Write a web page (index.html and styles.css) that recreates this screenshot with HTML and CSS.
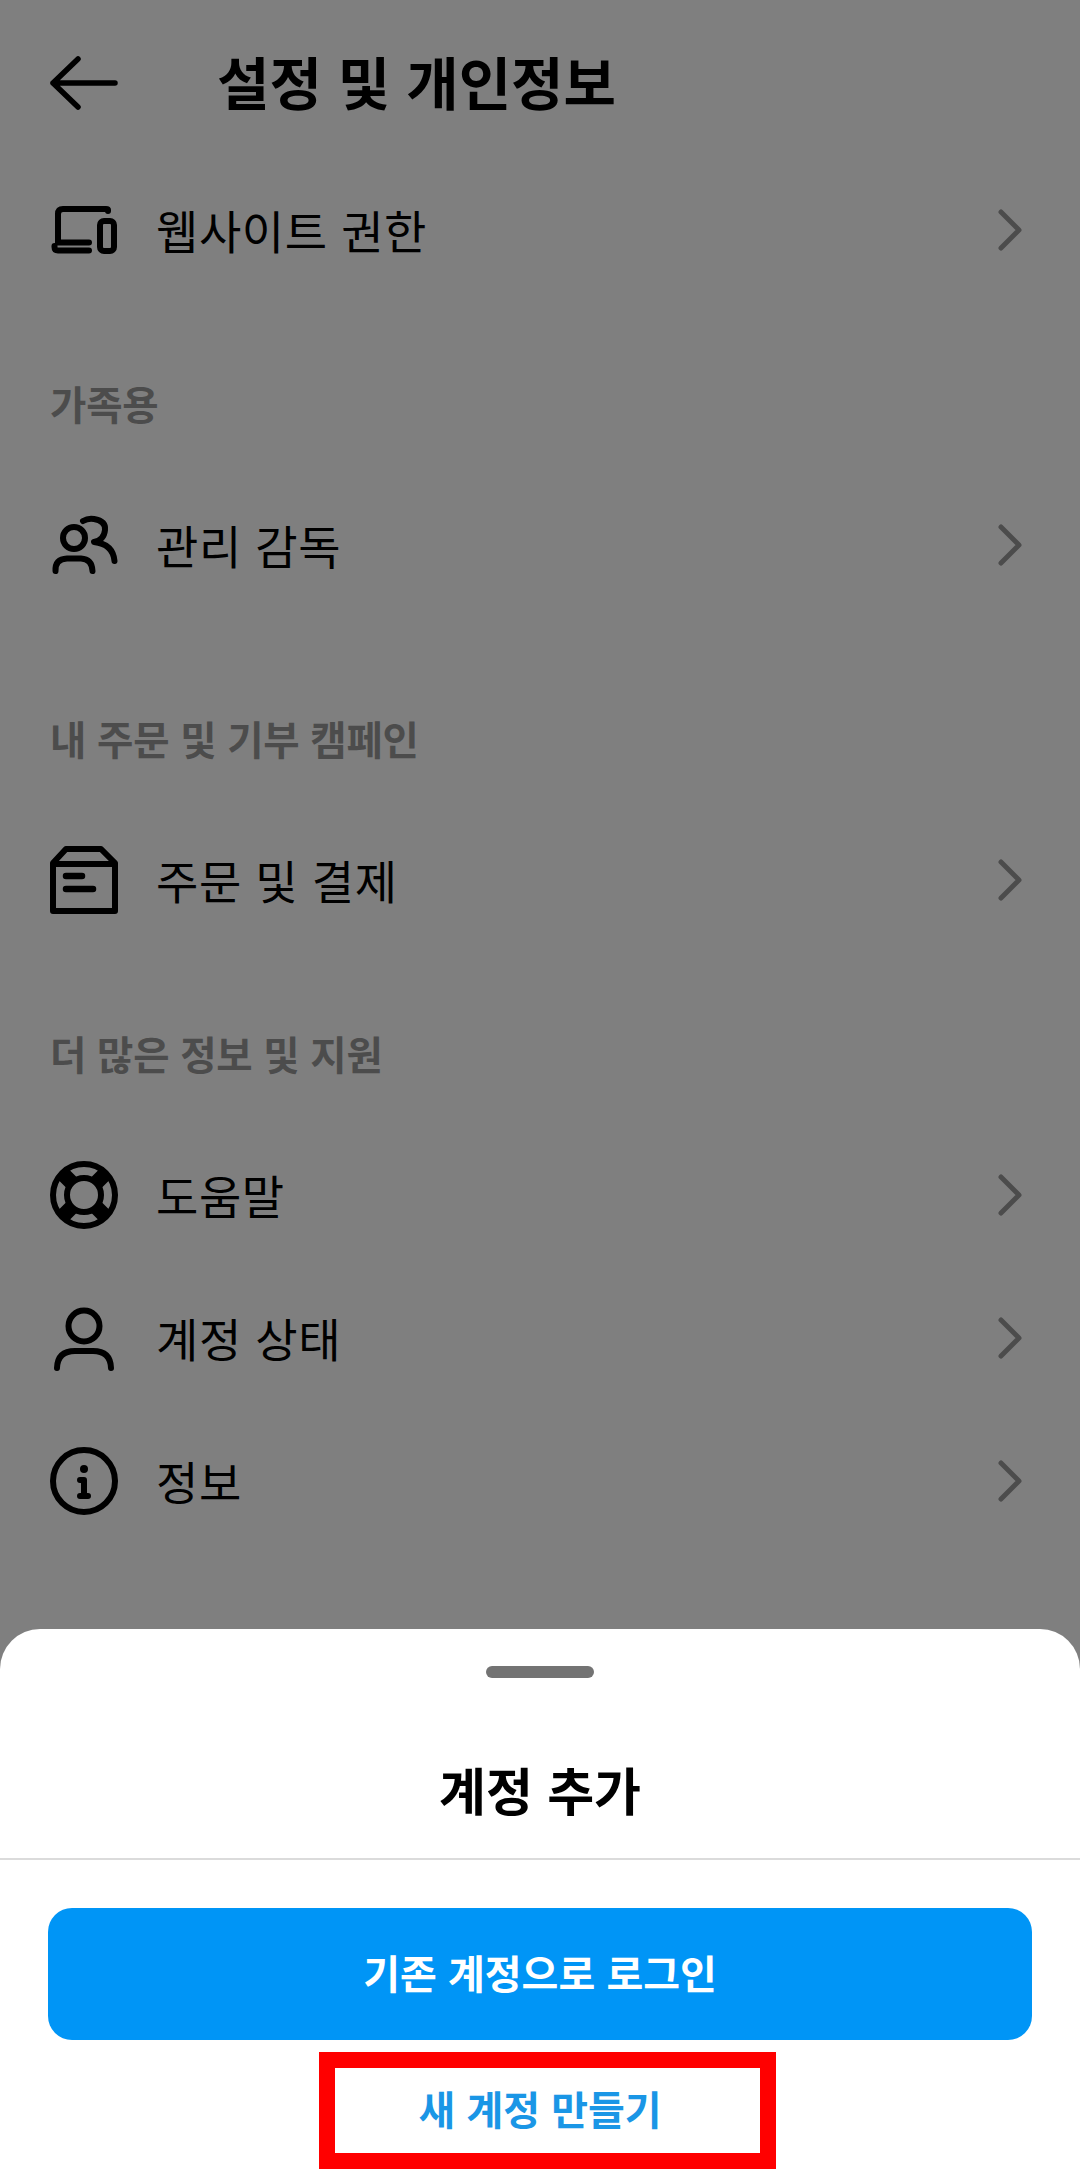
FILE: index.html
```html
<!DOCTYPE html>
<html lang="ko">
<head>
    <meta charset="UTF-8">
    <meta name="viewport" content="width=device-width, initial-scale=1.0">
    <title>설정 및 개인정보</title>
    <link rel="stylesheet" href="styles.css">
</head>
<body>
    <div class="page">
        <header class="topbar">
            <svg class="back" viewBox="0 0 68 54"><path d="M28 3 L3 27 L28 51 M3 27 H65"/></svg>
            <h1>설정 및 개인정보</h1>
        </header>

        <div class="row">
            <svg class="icon" viewBox="0 0 68 68"><path d="M58 15 V14 Q58 13 56 13 H13 Q8 13 8 18 V46 M8 46.500 H39 M4.500 50 V51 Q4.500 54.500 8 54.500 H39"/><rect x="50" y="25" width="14" height="30" rx="4"/></svg>
            <span class="row-text">웹사이트 권한</span>
            <svg class="chevron" viewBox="0 0 24 42"><path d="M3 3 L21 21 L3 39"/></svg>
        </div>

        <div class="label">가족용</div>
        <div class="row">
            <svg class="icon" viewBox="0 0 68 62"><circle cx="24" cy="24" r="11"/><path d="M5.500 57 Q5 45 17 44.500 H31 Q42 45 42.500 57"/><path d="M33 7 Q38 4 44 5 Q56 7 55 16 Q54 26 44 28 Q63 30 64.500 47"/></svg>
            <span class="row-text">관리 감독</span>
            <svg class="chevron" viewBox="0 0 24 42"><path d="M3 3 L21 21 L3 39"/></svg>
        </div>

        <div class="label label-gap">내 주문 및 기부 캠페인</div>
        <div class="row">
            <svg class="icon" viewBox="0 0 68 68"><path d="M3 17 L16 3 H51 L65 17 V65 H3 Z M3 18 H65"/><path class="thick" d="M16 30 H32 M16 43 H43"/></svg>
            <span class="row-text">주문 및 결제</span>
            <svg class="chevron" viewBox="0 0 24 42"><path d="M3 3 L21 21 L3 39"/></svg>
        </div>

        <div class="label">더 많은 정보 및 지원</div>
        <div class="row">
            <svg class="icon" viewBox="0 0 68 68"><circle cx="34" cy="34" r="31"/><circle cx="34" cy="34" r="17"/><path class="band" d="M13 13 L21 21 M55 13 L47 21 M13 55 L21 47 M55 55 L47 47"/></svg>
            <span class="row-text">도움말</span>
            <svg class="chevron" viewBox="0 0 24 42"><path d="M3 3 L21 21 L3 39"/></svg>
        </div>
        <div class="row">
            <svg class="icon" viewBox="0 0 68 68"><circle cx="34" cy="22" r="15.500"/><path d="M7 64 Q7.500 47 25 47 H43 Q60.500 47 61 64"/></svg>
            <span class="row-text">계정 상태</span>
            <svg class="chevron" viewBox="0 0 24 42"><path d="M3 3 L21 21 L3 39"/></svg>
        </div>
        <div class="row">
            <svg class="icon" viewBox="0 0 68 68"><circle cx="34" cy="34" r="31"/><circle class="dot" cx="34" cy="22" r="4"/><path d="M30 33 H34 V49 M30 49 H38"/></svg>
            <span class="row-text">정보</span>
            <svg class="chevron" viewBox="0 0 24 42"><path d="M3 3 L21 21 L3 39"/></svg>
        </div>
    </div>

    <div class="dim"></div>

    <div class="sheet">
        <div class="handle"></div>
        <h2>계정 추가</h2>
        <div class="sheet-actions">
            <button class="primary">기존 계정으로 로그인</button>
            <div class="link">새 계정 만들기</div>
        </div>
    </div>

    <div class="highlight"></div>
</body>
</html>
```

FILE: styles.css
```css
/* page */
body {
    margin: 0;
    width: 1080px;
    height: 2178px;
    overflow: hidden;
    position: relative;
    background: #fff;
    color: #000;
    font-family: "Noto Sans CJK KR", "Noto Sans", sans-serif;
}

.topbar {
    height: 158px;
    padding: 4px 0 0 50px;
    box-sizing: border-box;
    display: flex;
    align-items: center;
}

.topbar h1 {
    margin: 0 0 0 99px;
    padding-bottom: 2px;
    font-size: 57px;
    font-weight: 700;
}

.back {
    width: 68px;
    height: 54px;
    margin-top: 4px;
    fill: none;
    stroke: #000;
    stroke-width: 5.500;
    stroke-linecap: round;
    stroke-linejoin: round;
}

.row {
    height: 143px;
    padding: 0 58px 0 50px;
    display: flex;
    align-items: center;
}

.row-text {
    flex: 1;
    margin-left: 38px;
    padding-bottom: 2px;
    font-size: 46px;
    letter-spacing: 0.600px;
}

.icon {
    width: 68px;
    height: 68px;
    fill: none;
    stroke: #000;
    stroke-width: 6;
    stroke-linecap: round;
    stroke-linejoin: round;
}

.icon .thick {
    stroke-width: 6.500;
}

.icon .band {
    stroke-width: 15;
    stroke-linecap: butt;
}

.icon .dot {
    fill: #000;
    stroke: none;
}

.chevron {
    width: 24px;
    height: 42px;
    fill: none;
    stroke: #999;
    stroke-width: 5;
    stroke-linecap: round;
    stroke-linejoin: round;
}

/* section labels */
.label {
    height: 80px;
    margin-top: 62px;
    margin-bottom: 30px;
    padding: 0 0 2px 50px;
    box-sizing: border-box;
    display: flex;
    align-items: center;
    color: #999;
    font-size: 39.500px;
    font-weight: 700;
    letter-spacing: -0.200px;
}

.label-gap {
    margin-top: 82px;
}

/* dim layer over the settings page */
.dim {
    position: absolute;
    top: 0;
    left: 0;
    width: 100%;
    height: 100%;
    background: rgba(0, 0, 0, 0.5);
}

/* bottom sheet */
.sheet {
    position: absolute;
    left: 0;
    right: 0;
    top: 1629px;
    bottom: 0;
    background: #fff;
    border-radius: 40px 40px 0 0;
}

.handle {
    width: 108px;
    height: 12px;
    margin: 37px auto 0;
    border-radius: 6px;
    background: #737373;
}

.sheet h2 {
    height: 182px;
    margin: 0;
    box-sizing: border-box;
    border-bottom: 2px solid #dbdbdb;
    padding-top: 42px;
    display: flex;
    align-items: center;
    justify-content: center;
    font-size: 51px;
    font-weight: 700;
}

.sheet-actions {
    padding: 48px 48px 0;
}

.primary {
    display: block;
    width: 100%;
    height: 132px;
    padding: 0 0 5px;
    border: none;
    border-radius: 24px;
    background: #0095f6;
    color: #fff;
    font-family: inherit;
    font-size: 40px;
    font-weight: 700;
}

.link {
    height: 141px;
    padding-bottom: 5px;
    box-sizing: border-box;
    display: flex;
    align-items: center;
    justify-content: center;
    color: #1a96e6;
    font-size: 40px;
    font-weight: 700;
}

/* red annotation box */
.highlight {
    position: absolute;
    left: 319px;
    top: 2052px;
    width: 457px;
    height: 117px;
    box-sizing: border-box;
    border: 16px solid #ff0000;
}
```
